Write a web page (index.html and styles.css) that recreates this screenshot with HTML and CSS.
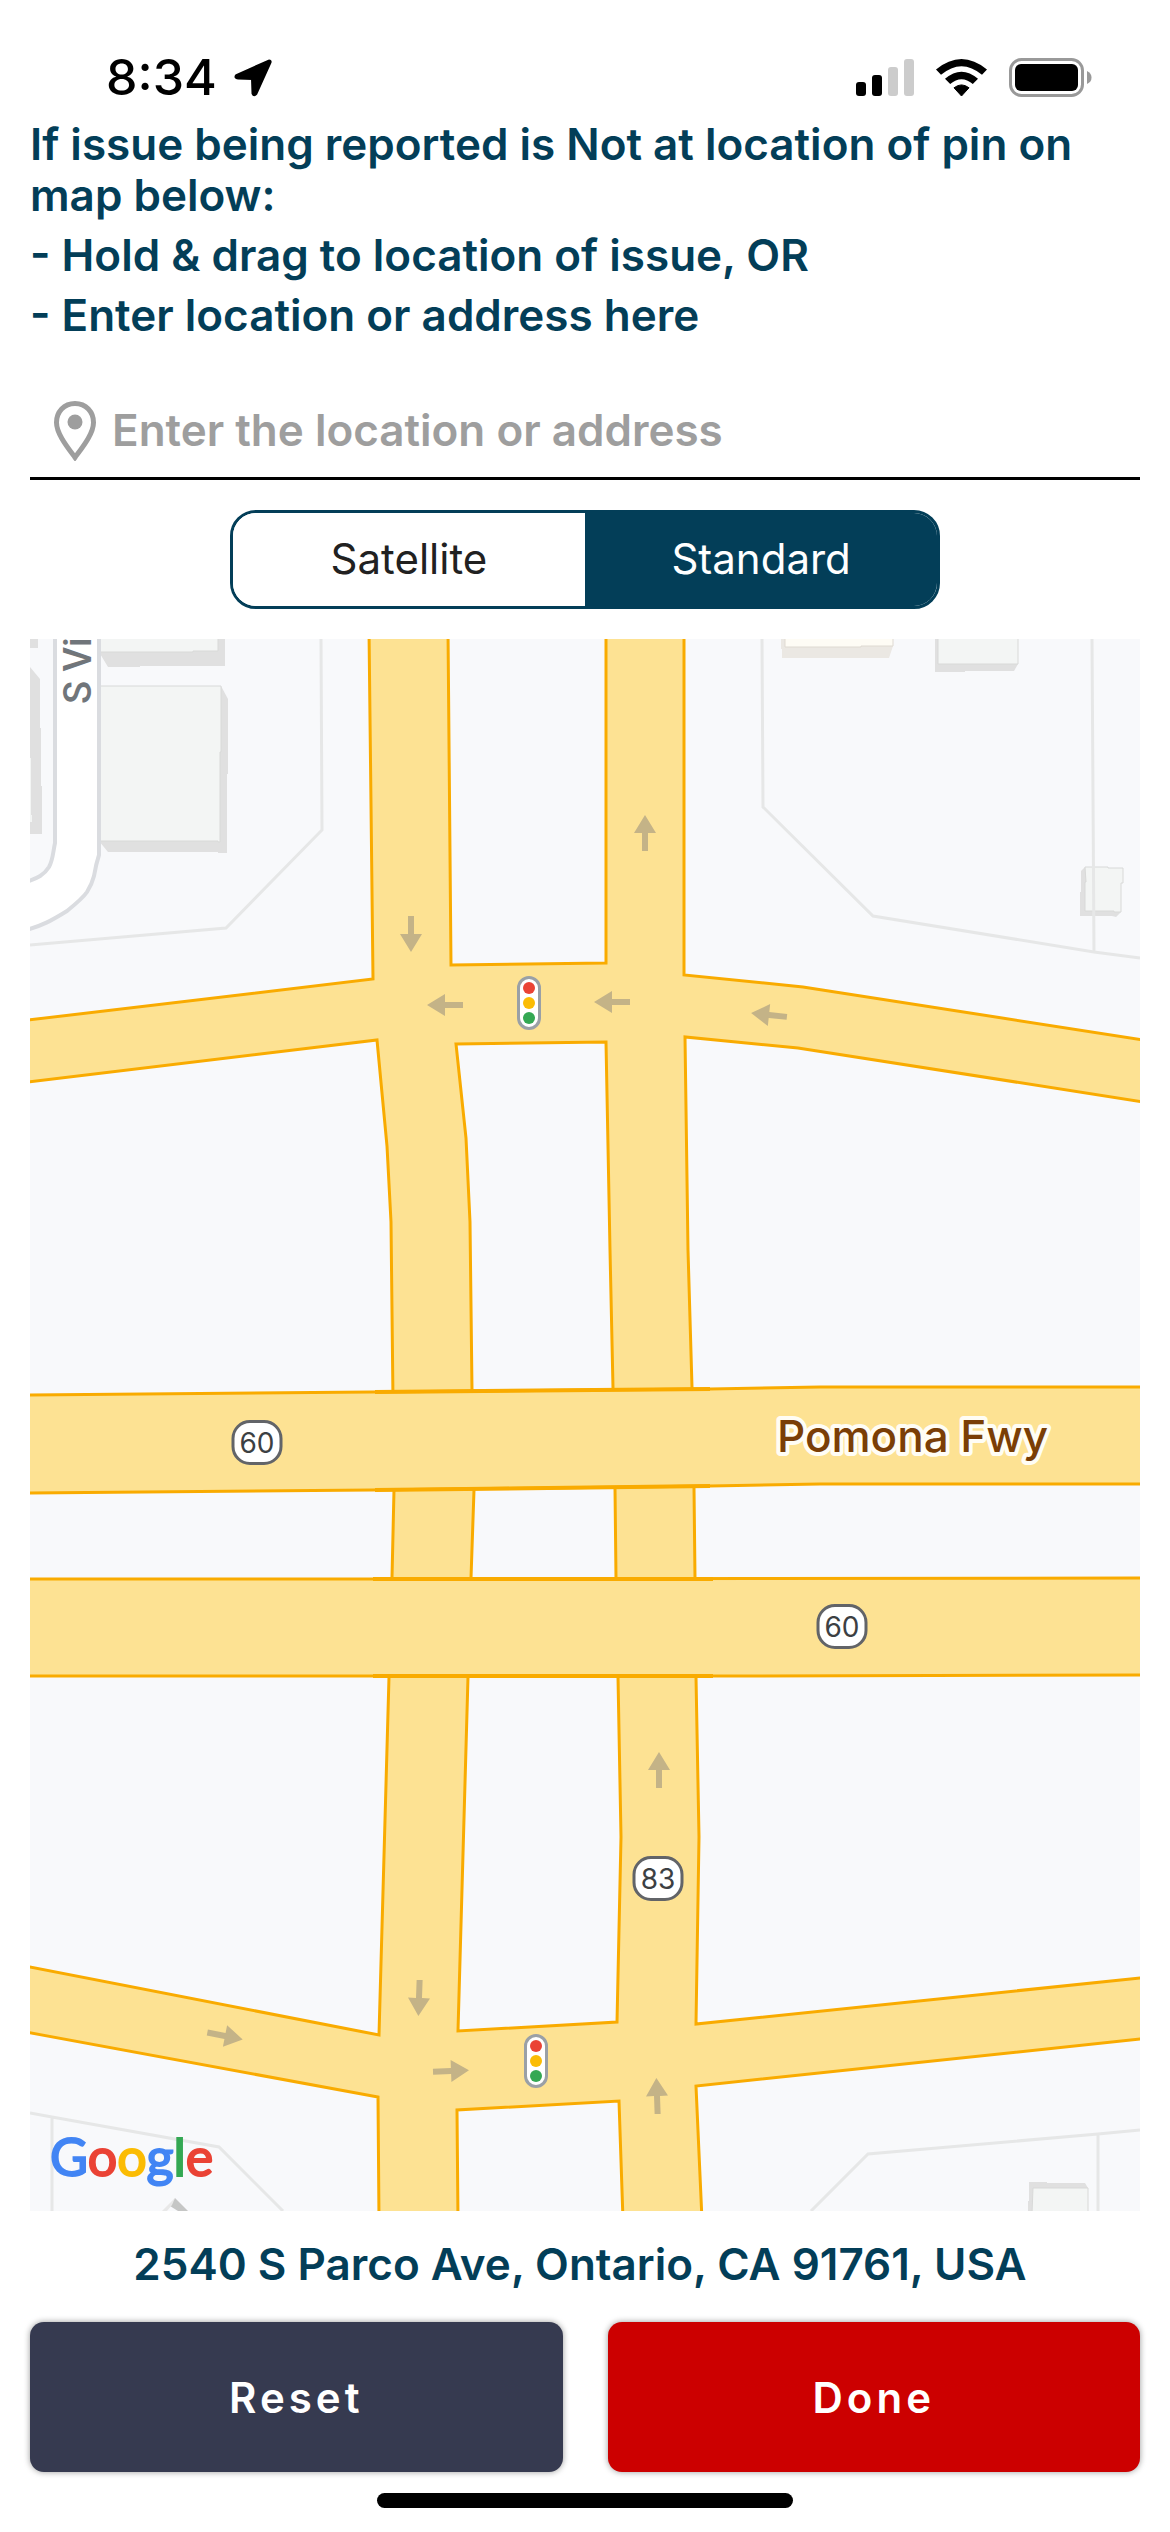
FILE: index.html
```html
<!DOCTYPE html>
<html lang="en">
<head>
<meta charset="utf-8">
<meta name="viewport" content="width=device-width, initial-scale=1">
<title>Issue location</title>
<link rel="stylesheet" href="styles.css">
</head>
<body>
<div class="screen">
  <header class="status">
    <div class="status-left">
      <time class="clock">8:34</time>
      <svg class="icon-location" viewBox="0 0 40 40" aria-hidden="true"><path d="M36 3 L3.500 17.500 Q2 19.800 5 20 L19.500 20.500 L20 35.500 Q21 38 23 35.500 L37 4.500 Q37.500 3 36 3 Z" fill="#000" stroke="#000" stroke-width="3" stroke-linejoin="round"/></svg>
    </div>
    <svg class="status-icons" viewBox="856 58 236 40" aria-hidden="true">
      <rect x="856" y="82" width="10" height="14" rx="3"/>
      <rect x="872" y="75" width="10" height="21" rx="3"/>
      <rect x="888" y="67" width="10" height="29" rx="3" fill="#ccc"/>
      <rect x="904" y="59" width="10" height="37" rx="3" fill="#ccc"/>
      <path d="M936 69.500 Q961.500 48.500 987 69.500 L982 74.800 Q961.500 57.500 941 74.800 Z"/>
      <path d="M945 78.800 Q961.500 64.500 978 78.800 L972.800 84 Q961.500 74.500 950.200 84 Z"/>
      <path d="M954 87.800 Q961.500 82 969 87.800 L961.500 96 Z" stroke="#000" stroke-linejoin="round"/>
      <rect x="1010.500" y="59.500" width="72" height="36" rx="11" fill="none" stroke="#999" stroke-width="3"/>
      <rect x="1015" y="64" width="63" height="27" rx="6"/>
      <path d="M1087 71 Q1091.500 73 1091.500 77.500 Q1091.500 82 1087 84 Z" fill="#999"/>
    </svg>
  </header>

  <main class="content">
    <section class="intro">
      <p>If issue being reported is Not at location of pin on map below:</p>
      <p>- Hold &amp; drag to location of issue, OR</p>
      <p>- Enter location or address here</p>
    </section>

    <label class="field">
      <svg class="icon-pin" viewBox="0 0 42 60" aria-hidden="true"><path d="M21 2.500 C10 2.500 2.500 11 2.500 21.500 C2.500 33 14 47 21 56.500 C28 47 39.500 33 39.500 21.500 C39.500 11 32 2.500 21 2.500 Z" fill="none" stroke="#9e9e9e" stroke-width="5"/><circle cx="21" cy="21" r="7.500" fill="#9e9e9e"/></svg>
      <input class="field-input" type="text" placeholder="Enter the location or address" aria-label="Location or address">
    </label>

    <div class="segmented" role="group" aria-label="Map type">
      <button class="segment" type="button" aria-pressed="false">Satellite</button>
      <button class="segment segment-active" type="button" aria-pressed="true">Standard</button>
    </div>

    <svg class="map" viewBox="30 639 1110 1572" preserveAspectRatio="xMidYMid slice" role="img" aria-label="Map">
      <defs>
        <path id="arrow" class="arrow" d="M0 -18 L11 0 H3 V18 H-3 V0 H-11 Z"/>
        <g id="light">
          <rect x="-10.500" y="-25.500" width="21" height="51" rx="10.500" fill="#fff" stroke="#9aa0a6" stroke-width="3"/>
          <circle cy="-15" r="6" fill="#ea4335"/><circle r="6" fill="#fbbc04"/><circle cy="15" r="6" fill="#34a853"/>
        </g>
        <rect id="shield" x="-24" y="-20.500" width="48" height="42" rx="17" fill="#fff" stroke="#626468" stroke-width="3"/>
      </defs>
      <rect class="land" x="30" y="639" width="1110" height="1572"/>

      <!-- buildings -->
      <g class="shade">
        <path d="M99 639 V652 L108 667 H140 V666 H225 V639 Z"/>
        <path d="M221 686 L228 699 V774 H227 V853 H218 V852 H108 L99 841 Z"/>
        <path d="M30 639 H38 V648 H30 Z M30 667 L40 679 V728 H41 V786 H42 V834 H30 Z"/>
        <path d="M935 639 V672 H965 V671 H1014 L1018 664 V639 Z"/>
        <path d="M1085 867 L1081 871 V892 H1080 V916 H1112 L1116 917 L1121 912 Z"/>
        <path d="M1029 2182 H1047 V2183 H1085 L1088 2188 V2211 H1028 V2201 H1029 Z"/>
      </g>
      <path d="M781 639 V649 H782 V658 H889 L893 646 V639 Z" fill="#ebe8e3"/>
      <path d="M785 636 H893 V646 H861 V647 H785 Z" fill="#fefcf5" stroke="#dfdad2"/>
      <g class="roof">
        <path d="M99 636 H218 V651 H193 V652 H99 Z"/>
        <path d="M99 686 H221 V752 H220 V842 H218 V841 H99 Z"/>
        <path d="M938 636 H1018 V664 H938 Z"/>
        <path d="M1085 867 H1108 V868 H1123 V883 H1121 V912 H1114 V911 H1085 V882 H1086 Z"/>
        <path d="M1033 2188 H1088 V2214 H1032 Z"/>
      </g>
      <path d="M30 758 H31 V815 H32 V822 H30 Z" fill="#f3f5f4"/>
      <path d="M175 2198 L188 2211 H178 L170 2206 Z" fill="#c5c6c5"/>
      <path d="M175 2198 L162 2211 H167 L172 2205 Z" fill="#e8e8e8"/>

      <g class="parcel">
        <path d="M321 639 L322 830 L226 928 L30 945"/>
        <path d="M762 639 L763 807 L873 916 L1094 952 L1140 958 M1092 639 L1094 952"/>
        <path d="M811 2211 L868 2154 L1098 2134 L1140 2130 M1098 2134 V2211"/>
        <path d="M30 2113 L52 2117 L219 2147 L283 2211 M52 2117 V2211"/>
      </g>

      <!-- side street -->
      <path class="street" d="M55 630 V843 C53 852 53 860 49 867 C44 875 38 878 26 882 V930 C45 925 55 918 67 911 Q83 898 87 892 Q92 884 94 876 Q96 864 99 855 V630 Z"/>
      <text class="street-name" transform="translate(91 704) rotate(-90)">S Vi</text>

      <!-- surface roads -->
      <g class="road">
        <path d="M369 630 L373 979 L20 1021 V1083 L377 1040 L387 1146 L391 1222 L393 1400 V1485 L394 1490 L392 1578 L389 1677 L379 2035 L20 1965 V2031 L378 2097 L379 2220 H458 L457 2110 L619 2101 L623 2220 H702 L696 2086 L1150 2038 V1977 L696 2024 L699 1837 L696 1677 L695 1578 L694 1488 L692 1387 L688 1250 L685 1037 L798 1048 L1150 1103 V1041 L803 987 L684 975 V630 H606 V963 L451 965 L448 630 Z
          M456 1044 L606 1042 L610 1250 L613 1388 L615 1488 L616 1578 L618 1677 L621 1837 L617 2022 L458 2031 L468 1677 L471 1578 L474 1490 L472 1390 L470 1222 L466 1138 Z" fill-rule="evenodd"/>
      </g>

      <!-- freeway -->
      <g class="road">
        <path d="M20 1395 L372 1392 L710 1389 L820 1387 H1150 V1484 H820 L710 1486 L372 1490 L20 1493 Z"/>
        <path d="M20 1579 L372 1579 L1150 1578 V1675 L710 1676 L20 1676 Z"/>
      </g>
      <path class="bridge" d="M375 1392 L710 1389 M375 1490 L710 1486 M373 1579 H713 M373 1676 H713"/>

      <use href="#arrow" transform="translate(411 934) rotate(180)"/>
      <use href="#arrow" transform="translate(445 1005) rotate(-90)"/>
      <use href="#arrow" transform="translate(612 1002) rotate(-90)"/>
      <use href="#arrow" transform="translate(769 1015) rotate(-84)"/>
      <use href="#arrow" transform="translate(645 833)"/>
      <use href="#arrow" transform="translate(659 1770)"/>
      <use href="#arrow" transform="translate(419 1998) rotate(182)"/>
      <use href="#arrow" transform="translate(451 2071) rotate(88)"/>
      <use href="#arrow" transform="translate(657 2096) rotate(-2)"/>
      <use href="#arrow" transform="translate(225 2036) rotate(101)"/>
      <use href="#light" transform="translate(529 1003)"/>
      <use href="#light" transform="translate(536 2061)"/>

      <g class="route">
        <use href="#shield" x="257" y="1442"/><text x="257" y="1453">60</text>
        <use href="#shield" x="842" y="1626"/><text x="842" y="1637">60</text>
        <use href="#shield" x="658" y="1878"/><text x="658" y="1889">83</text>
      </g>
      <text class="freeway-name" x="777" y="1452">Pomona Fwy</text>
      <text class="brand" x="50" y="2176"><tspan class="blue">G</tspan><tspan class="red">o</tspan><tspan class="yellow">o</tspan><tspan class="blue">g</tspan><tspan class="green">l</tspan><tspan class="red">e</tspan></text>
    </svg>

    <p class="address">2540 S Parco Ave, Ontario, CA 91761, USA</p>

    <div class="actions">
      <button class="action action-reset" type="button">Reset</button>
      <button class="action action-done" type="button">Done</button>
    </div>
  </main>
  <div class="home-bar"></div>
</div>
</body>
</html>
```

FILE: styles.css
```css
* { box-sizing: border-box; }

body {
  margin: 0;
  background: #fff;
  color: #033e58;
  font: 600 44px/51px Inter, "Liberation Sans", sans-serif;
}

p { margin: 0; }

button, input { font: inherit; }

.screen {
  display: flex;
  flex-direction: column;
  min-height: 100vh;
  padding-bottom: 24px;
}

.status {
  display: flex;
  align-items: center;
  justify-content: space-between;
  height: 119px;
  padding: 36px 78px 0 106px;
}

.status-left {
  display: flex;
  align-items: center;
  gap: 16px;
}

.clock {
  color: #000;
  font-size: 50px;
  font-weight: 500;
}

.icon-location { width: 40px; height: 40px; }

.status-icons { width: 236px; height: 40px; }

.content {
  display: flex;
  flex: 1;
  flex-direction: column;
  padding: 0 30px;
}

.intro {
  display: flex;
  flex-direction: column;
  gap: 9px;
  padding-right: 30px;
}

.field {
  display: flex;
  align-items: center;
  gap: 16px;
  height: 96px;
  margin-top: 43px;
  padding-left: 24px;
  border-bottom: 3px solid #000;
}

.icon-pin { width: 42px; height: 60px; }

.field-input {
  flex: 1;
  min-width: 0;
  padding: 0;
  border: 0;
  outline: 0;
  background: none;
  color: #033e58;
}

.field-input::placeholder { color: #9e9e9e; opacity: 1; }

.segmented {
  display: flex;
  align-self: center;
  width: 64%;
  height: 99px;
  margin: 30px 0;
  overflow: hidden;
  border: 3px solid #033e58;
  border-radius: 26px;
}

.segment {
  flex: 1;
  padding: 0 0 3px;
  border: 0;
  background: #fff;
  color: #212121;
  font-size: 42px;
  font-weight: 400;
}

.segment-active { background: #033e58; color: #fff; }

.map {
  display: block;
  flex: 1 1 0;
  width: 100%;
  min-height: 400px;
}

.land { fill: #f8f9fb; }
.shade { fill: #e0e0e0; }
.roof { fill: #f3f5f4; stroke: #d8d9d8; }
.parcel { fill: none; stroke: #e6e7e7; stroke-width: 3; }
.street { fill: #fff; stroke: #dadce0; stroke-width: 4; }
.road { fill: #fde293; stroke: #f9ab00; stroke-width: 3; }
.bridge { fill: none; stroke: #f9ab00; stroke-width: 4; }
.arrow { fill: #c4b387; }

.street-name { fill: #70757a; font: 500 38px Roboto, sans-serif; }

.route {
  fill: #3c4043;
  font: 400 28px Inter, sans-serif;
  text-anchor: middle;
}

.freeway-name {
  fill: #7a3e06;
  stroke: #fffdf5;
  stroke-width: 8;
  stroke-linejoin: round;
  paint-order: stroke;
  font: 500 44px Inter, sans-serif;
}

.brand {
  stroke-width: 2;
  font: 400 52px Lato, sans-serif;
}

.blue { fill: #4285f4; stroke: #4285f4; }
.red { fill: #ea4335; stroke: #ea4335; }
.yellow { fill: #fbbc04; stroke: #fbbc04; }
.green { fill: #34a853; stroke: #34a853; }

.address {
  padding: 28px 10px 32px 0;
  text-align: center;
}

.actions {
  display: flex;
  gap: 45px;
}

.action {
  flex: 1;
  height: 150px;
  padding: 0;
  border: 0;
  border-radius: 14px;
  box-shadow: 0 0 6px rgba(0, 0, 0, 0.4);
  color: #fff;
  font-size: 42px;
  letter-spacing: 4px;
}

.action-reset { background: #363a50; }
.action-done { background: #c00; }

.home-bar {
  align-self: center;
  width: 416px;
  height: 15px;
  margin-top: 21px;
  border-radius: 8px;
  background: #000;
}
```
